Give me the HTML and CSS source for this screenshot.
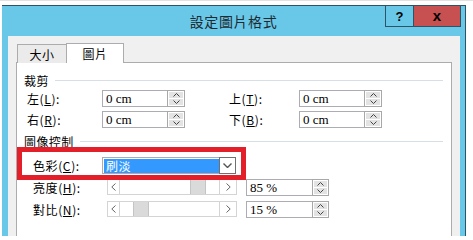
FILE: index.html
```html
<!DOCTYPE html>
<html lang="zh-Hant">
<head>
    <meta charset="UTF-8">
    <title>設定圖片格式</title>
    <link rel="stylesheet" href="styles.css">
</head>
<body>
    <div class="screen">
        <div class="window">
            <div class="titlebar">
                <div class="title">設定圖片格式</div>
                <div class="caption">
                    <div class="btn-help">?</div>
                    <div class="btn-close">x</div>
                </div>
            </div>
            <div class="client">
                <div class="tabs">
                    <div class="tab">大小</div>
                    <div class="tab active">圖片</div>
                </div>
                <div class="panel">
                    <div class="group-head"><span>裁剪</span><i></i></div>
                    <div class="row">
                        <label class="lbl">左(<u>L</u>):</label>
                        <div class="field"><div class="input">0 cm</div><div class="spin"><b><svg width="7" height="4" viewBox="0 0 7 4"><path d="M0.5 3.5 L3.5 0.5 L6.5 3.5" fill="none" stroke="#444" stroke-width="1"/></svg></b><b><svg width="7" height="4" viewBox="0 0 7 4"><path d="M0.5 0.5 L3.5 3.5 L6.5 0.5" fill="none" stroke="#444" stroke-width="1"/></svg></b></div></div>
                        <label class="lbl lbl-right">上(<u>T</u>):</label>
                        <div class="field"><div class="input">0 cm</div><div class="spin"><b><svg width="7" height="4" viewBox="0 0 7 4"><path d="M0.5 3.5 L3.5 0.5 L6.5 3.5" fill="none" stroke="#444" stroke-width="1"/></svg></b><b><svg width="7" height="4" viewBox="0 0 7 4"><path d="M0.5 0.5 L3.5 3.5 L6.5 0.5" fill="none" stroke="#444" stroke-width="1"/></svg></b></div></div>
                    </div>
                    <div class="row row-next">
                        <label class="lbl">右(<u>R</u>):</label>
                        <div class="field"><div class="input">0 cm</div><div class="spin"><b><svg width="7" height="4" viewBox="0 0 7 4"><path d="M0.5 3.5 L3.5 0.5 L6.5 3.5" fill="none" stroke="#444" stroke-width="1"/></svg></b><b><svg width="7" height="4" viewBox="0 0 7 4"><path d="M0.5 0.5 L3.5 3.5 L6.5 0.5" fill="none" stroke="#444" stroke-width="1"/></svg></b></div></div>
                        <label class="lbl lbl-right">下(<u>B</u>):</label>
                        <div class="field"><div class="input">0 cm</div><div class="spin"><b><svg width="7" height="4" viewBox="0 0 7 4"><path d="M0.5 3.5 L3.5 0.5 L6.5 3.5" fill="none" stroke="#444" stroke-width="1"/></svg></b><b><svg width="7" height="4" viewBox="0 0 7 4"><path d="M0.5 0.5 L3.5 3.5 L6.5 0.5" fill="none" stroke="#444" stroke-width="1"/></svg></b></div></div>
                    </div>
                    <div class="group-head group-two"><span>圖像控制</span><i></i></div>
                    <div class="row row-color">
                        <label class="lbl lbl-wide">色彩(<u>C</u>):</label>
                        <div class="combo">
                            <div class="combo-value">刷淡</div>
                            <div class="combo-btn"><svg width="9" height="5" viewBox="0 0 9 5"><path d="M0.5 0.5 L4.5 4.5 L8.5 0.5" fill="none" stroke="#555" stroke-width="1.4"/></svg></div>
                        </div>
                    </div>
                    <div class="row row-slider">
                        <label class="lbl lbl-wide lbl-slider">亮度(<u>H</u>):</label>
                        <div class="slider">
                            <div class="s-btn"><svg width="5" height="8" viewBox="0 0 5 8"><path d="M4.5 0.5 L0.8 4 L4.5 7.5" fill="none" stroke="#666" stroke-width="1"/></svg></div>
                            <div class="track"><div class="thumb" style="margin-left: 70px"></div></div>
                            <div class="s-btn s-right"><svg width="5" height="8" viewBox="0 0 5 8"><path d="M0.5 0.5 L4.2 4 L0.5 7.5" fill="none" stroke="#666" stroke-width="1"/></svg></div>
                        </div>
                        <div class="field field-pct"><div class="input">85 %</div><div class="spin"><b><svg width="7" height="4" viewBox="0 0 7 4"><path d="M0.5 3.5 L3.5 0.5 L6.5 3.5" fill="none" stroke="#444" stroke-width="1"/></svg></b><b><svg width="7" height="4" viewBox="0 0 7 4"><path d="M0.5 0.5 L3.5 3.5 L6.5 0.5" fill="none" stroke="#444" stroke-width="1"/></svg></b></div></div>
                    </div>
                    <div class="row row-slider row-next">
                        <label class="lbl lbl-wide lbl-slider">對比(<u>N</u>):</label>
                        <div class="slider">
                            <div class="s-btn"><svg width="5" height="8" viewBox="0 0 5 8"><path d="M4.5 0.5 L0.8 4 L4.5 7.5" fill="none" stroke="#666" stroke-width="1"/></svg></div>
                            <div class="track"><div class="thumb" style="margin-left: 13px"></div></div>
                            <div class="s-btn s-right"><svg width="5" height="8" viewBox="0 0 5 8"><path d="M0.5 0.5 L4.2 4 L0.5 7.5" fill="none" stroke="#666" stroke-width="1"/></svg></div>
                        </div>
                        <div class="field field-pct"><div class="input">15 %</div><div class="spin"><b><svg width="7" height="4" viewBox="0 0 7 4"><path d="M0.5 3.5 L3.5 0.5 L6.5 3.5" fill="none" stroke="#444" stroke-width="1"/></svg></b><b><svg width="7" height="4" viewBox="0 0 7 4"><path d="M0.5 0.5 L3.5 3.5 L6.5 0.5" fill="none" stroke="#444" stroke-width="1"/></svg></b></div></div>
                    </div>
                    <div class="highlight"></div>
                </div>
            </div>
        </div>
    </div>
</body>
</html>
```

FILE: styles.css
```css
* {
    box-sizing: border-box;
}
body {
    margin: 0;
    background: #fff;
    font-family: "Noto Sans CJK TC", "Noto Sans", sans-serif;
    font-size: 12px;
    color: #000;
}
.screen {
    border-top: 1px solid #e2e2e2;
    padding-top: 4px;
}
.window {
    margin-left: 2px;
    width: 464px;
    height: 231px;
    background: #69c7e8;
    border-top: 1px solid #2b5566;
    border-right: 1px solid #2b5566;
    overflow: hidden;
    display: flex;
    flex-direction: column;
}
.titlebar {
    height: 30px;
    flex: none;
    position: relative;
    display: flex;
    align-items: center;
    justify-content: center;
}
.title {
    font-size: 14px;
    letter-spacing: 0.6px;
    color: #1f2a30;
    line-height: 16px;
}
.caption {
    position: absolute;
    top: 0;
    right: 4px;
    display: flex;
}
.btn-help, .btn-close {
    height: 21px;
    display: flex;
    align-items: center;
    justify-content: center;
    font-family: "Liberation Sans", sans-serif;
    font-weight: bold;
    border: 1px solid #2b5566;
    border-top: none;
}
.btn-help {
    width: 29px;
    font-size: 13px;
}
.btn-close {
    width: 47px;
    background: #c75050;
    border-left: none;
    font-size: 15px;
    line-height: 15px;
    padding-bottom: 2px;
}
.client {
    flex: 1;
    margin-left: 6px;
    width: 452px;
    background: #f0f0f0;
    padding-top: 7px;
}
.tabs {
    display: flex;
    align-items: flex-end;
    margin-left: 9px;
    height: 20px;
    position: relative;
    z-index: 1;
    margin-bottom: -1px;
}
.tab {
    width: 50px;
    height: 19px;
    border: 1px solid #acacac;
    border-bottom: none;
    background: #ebebeb;
    display: flex;
    align-items: center;
    justify-content: center;
    line-height: 14px;
    padding-top: 1px;
    letter-spacing: 0.5px;
}
.tab.active {
    width: 58px;
    height: 20px;
    margin-left: -1px;
    background: #fff;
    padding-top: 0;
}
.panel {
    position: relative;
    margin-left: 8px;
    width: 436px;
    height: 200px;
    background: #fff;
    border: 1px solid #acacac;
}
.group-head {
    display: flex;
    align-items: center;
    margin-top: 11px;
    margin-right: 8px;
    padding-left: 7px;
    height: 13px;
    line-height: 13px;
    letter-spacing: 0.4px;
}
.group-head i {
    flex: 1;
    height: 1px;
    background: #d5dfe5;
    margin-left: 6px;
}
.group-two {
    margin-top: 7px;
}
.row {
    display: flex;
    align-items: center;
    margin-top: 3px;
    height: 17px;
}
.row-next {
    margin-top: 4px;
}
.lbl {
    width: 85px;
    padding-left: 10px;
    line-height: 14px;
    letter-spacing: 0.6px;
}
.lbl-right {
    width: 70px;
    padding-left: 0;
    margin-left: 44px;
}
.lbl-wide {
    padding-left: 16px;
}
.lbl-slider {
    width: 90px;
}
.field {
    display: flex;
    height: 17px;
}
.input {
    width: 65px;
    height: 17px;
    border: 1px solid #abadb3;
    border-right: none;
    background: #fff;
    font-family: "Liberation Serif", serif;
    font-size: 13px;
    line-height: 15px;
    padding-left: 3px;
}
.spin {
    width: 18px;
    height: 17px;
    border: 1px solid #a8a8a8;
    background: #fff;
    display: flex;
    flex-direction: column;
    padding: 1px;
    gap: 1px;
}
.spin b {
    flex: 1;
    background: #e3e3e3;
    display: flex;
    align-items: center;
    justify-content: center;
}
.row-color {
    margin-top: 9px;
}
.combo {
    display: flex;
    width: 134px;
    height: 17px;
    border: 1px solid #abadb3;
    background: #fff;
    padding: 1px 0 0 1px;
}
.combo-value {
    flex: 1;
    height: 14px;
    background: #3399ff;
    color: #fff;
    line-height: 14px;
    padding-left: 2px;
    letter-spacing: 0.5px;
}
.combo-btn {
    width: 17px;
    height: 17px;
    margin-top: -2px;
    margin-right: -1px;
    border: 1px solid #707070;
    background: #fff;
    display: flex;
    align-items: center;
    justify-content: center;
}
.row-slider {
    margin-top: 5px;
}
.slider {
    display: flex;
    width: 130px;
    height: 16px;
    border: 1px solid #d4d4d4;
    margin-right: 9px;
    margin-top: -1px;
}
.s-btn {
    width: 12px;
    border-right: 1px solid #d4d4d4;
    display: flex;
    align-items: center;
    justify-content: center;
}
.s-right {
    width: 17px;
    border-right: none;
    border-left: 1px solid #d4d4d4;
}
.track {
    flex: 1;
    display: flex;
}
.thumb {
    width: 16px;
    background: #dadada;
    border-left: 1px solid #c4c4c4;
    border-right: 1px solid #c4c4c4;
}
.field-pct .input {
    width: 66px;
}
.field-pct .spin {
    width: 17px;
}
.highlight {
    position: absolute;
    left: 0;
    top: 84px;
    width: 229px;
    height: 33px;
    border: 5px solid #e3202a;
}
```
